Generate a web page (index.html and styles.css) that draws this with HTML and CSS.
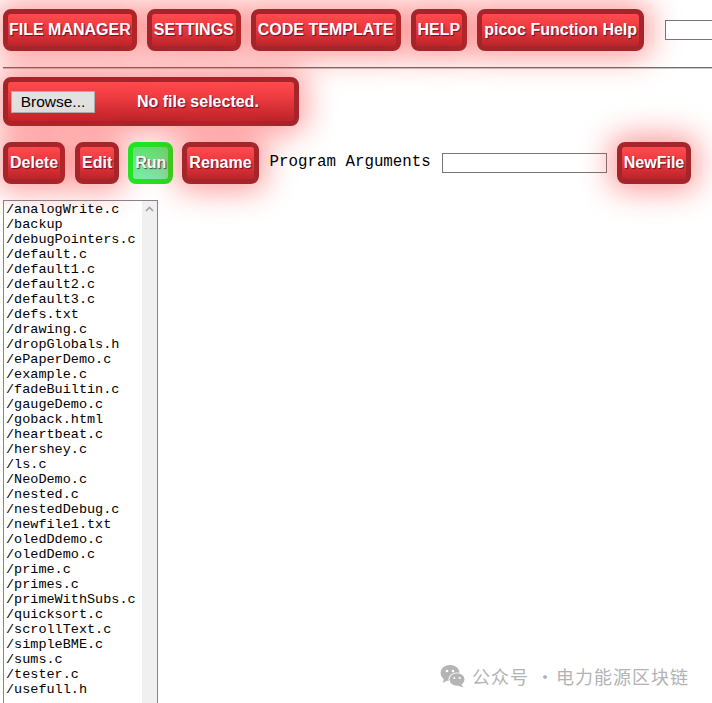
FILE: index.html
```html
<!DOCTYPE html>
<html>
<head>
<meta charset="utf-8">
<link rel="stylesheet" href="styles.css">
</head>
<body>
<div class="page">
  <div class="topbar">
    <button class="btn tight">FILE MANAGER</button>
    <button class="btn">SETTINGS</button>
    <button class="btn">CODE TEMPLATE</button>
    <button class="btn">HELP</button>
    <button class="btn">picoc Function Help</button>
    <input class="top-input" type="text">
  </div>
  <div class="rule"></div>
  <div class="upload btn">
    <span class="browse">Browse...</span>
    <span class="nofile">No file selected.</span>
  </div>
  <div class="actions">
    <button class="btn">Delete</button>
    <button class="btn">Edit</button>
    <button class="btn run">Run</button>
    <button class="btn">Rename</button>
    <span class="args-label">Program Arguments</span>
    <input class="args-input" type="text">
    <button class="btn">NewFile</button>
  </div>
  <div class="listbox">
    <ul class="files">
      <li>/analogWrite.c</li>
      <li>/backup</li>
      <li>/debugPointers.c</li>
      <li>/default.c</li>
      <li>/default1.c</li>
      <li>/default2.c</li>
      <li>/default3.c</li>
      <li>/defs.txt</li>
      <li>/drawing.c</li>
      <li>/dropGlobals.h</li>
      <li>/ePaperDemo.c</li>
      <li>/example.c</li>
      <li>/fadeBuiltin.c</li>
      <li>/gaugeDemo.c</li>
      <li>/goback.html</li>
      <li>/heartbeat.c</li>
      <li>/hershey.c</li>
      <li>/ls.c</li>
      <li>/NeoDemo.c</li>
      <li>/nested.c</li>
      <li>/nestedDebug.c</li>
      <li>/newfile1.txt</li>
      <li>/oledDdemo.c</li>
      <li>/oledDemo.c</li>
      <li>/prime.c</li>
      <li>/primes.c</li>
      <li>/primeWithSubs.c</li>
      <li>/quicksort.c</li>
      <li>/scrollText.c</li>
      <li>/simpleBME.c</li>
      <li>/sums.c</li>
      <li>/tester.c</li>
      <li>/usefull.h</li>
    </ul>
    <div class="scrollbar">
      <svg class="arrow" width="9" height="6" viewBox="0 0 9 6"><path d="M1 5 L4.5 1.5 L8 5" fill="none" stroke="#a3a3a3" stroke-width="1.6"/></svg>
    </div>
  </div>
</div>
<div class="watermark">
  <svg class="wechat" width="26" height="24" viewBox="0 0 26 24">
    <ellipse cx="10" cy="9" rx="9.5" ry="8" fill="#b4b4b4"/>
    <path d="M4 14 L3 19 L8 16 Z" fill="#b4b4b4"/>
    <circle cx="7" cy="7" r="1.3" fill="#fff"/>
    <circle cx="13" cy="7" r="1.3" fill="#fff"/>
    <ellipse cx="17" cy="15.5" rx="8.5" ry="7" fill="#fff"/>
    <ellipse cx="17" cy="15.5" rx="7.5" ry="6.2" fill="#b4b4b4"/>
    <path d="M21 20 L23.5 23.5 L17.5 21.5 Z" fill="#b4b4b4"/>
    <circle cx="14.3" cy="14" r="1.1" fill="#fff"/>
    <circle cx="19.7" cy="14" r="1.1" fill="#fff"/>
  </svg>
  <span class="wm-text">公众号<span class="dot">·</span>电力能源区块链</span>
</div>
</body>
</html>
```

FILE: styles.css
```css
html, body {
  margin: 0;
  padding: 0;
  background: #fff;
  overflow: hidden;
}
body {
  width: 712px;
  height: 703px;
  position: relative;
  font-family: "Liberation Sans", Arial, sans-serif;
}
.page {
  padding: 9px 0 0 3px;
}
.topbar, .actions {
  display: flex;
  align-items: center;
  gap: 10px;
}
.btn {
  box-sizing: border-box;
  height: 42px;
  border: 5px solid #a5252a;
  border-radius: 8px;
  padding: 0 2px;
  background: linear-gradient(#ff4b4e, #f03d42 35%, #c9292f 85%, #b8262b);
  color: #fff;
  font-family: "Liberation Sans", Arial, sans-serif;
  font-weight: bold;
  font-size: 16px;
  line-height: 18px;
  text-shadow: 1px 1px 1px rgba(60, 0, 40, 0.7);
  box-shadow: 0 0 30px 7px rgba(255, 40, 40, 0.45);
  white-space: nowrap;
  cursor: pointer;
}
.btn.tight {
  padding: 0 1px;
}
.btn.run {
  border-color: #1fe41f;
  background: linear-gradient(#5fe06e, #72e598 60%, #80e8a8);
  box-shadow: none;
  padding: 0 2px;
  margin-left: -1px;
  margin-right: -1px;
}
.top-input {
  box-sizing: border-box;
  margin-left: 11px;
  width: 60px;
  height: 20px;
  border: 1px solid #767676;
  padding: 0;
  flex: none;
}
.rule {
  margin: 16px 0 0 0;
  border-top: 1px solid #6f6f6f;
  border-bottom: 1px solid #c8c8c8;
}
.upload {
  display: flex;
  align-items: center;
  width: 296px;
  height: 49px;
  margin-top: 8px;
  padding: 0 0 0 3px;
}
.browse {
  box-sizing: border-box;
  width: 84px;
  height: 22px;
  background: #e1e1e1;
  border: 1px solid #adadad;
  color: #000;
  font-weight: normal;
  font-size: 15.5px;
  line-height: 20px;
  text-align: center;
  text-shadow: none;
}
.nofile {
  margin-left: 42px;
}
.actions {
  margin-top: 16px;
}
.args-label {
  font-family: "Liberation Mono", "Courier New", monospace;
  font-size: 15.8px;
  color: #000;
  margin: 0 1px 3px 1px;
}
.args-input {
  box-sizing: border-box;
  width: 165px;
  height: 20px;
  border: 1px solid #767676;
  padding: 0;
}
.listbox {
  margin-top: 16px;
  width: 155px;
  height: 520px;
  box-sizing: border-box;
  border: 1px solid #828790;
  display: flex;
  background: #fff;
}
.files {
  list-style: none;
  margin: 0;
  padding: 1px 0 0 2px;
  flex: 1;
  font-family: "Liberation Mono", "Courier New", monospace;
  font-size: 13.5px;
  line-height: 15px;
  color: #000;
}
.scrollbar {
  width: 15px;
  background: #f0f0f0;
  display: flex;
  justify-content: center;
  align-items: flex-start;
}
.arrow {
  margin-top: 5px;
}
.watermark {
  position: absolute;
  left: 440px;
  top: 663px;
  display: flex;
  align-items: center;
  gap: 6px;
  font-family: "Noto Sans CJK SC", sans-serif;
  font-size: 18px;
  color: #b3b3b3;
}
.wm-text {
  letter-spacing: 1px;
}
.dot {
  margin: 0 1px 0 7px;
}
```
